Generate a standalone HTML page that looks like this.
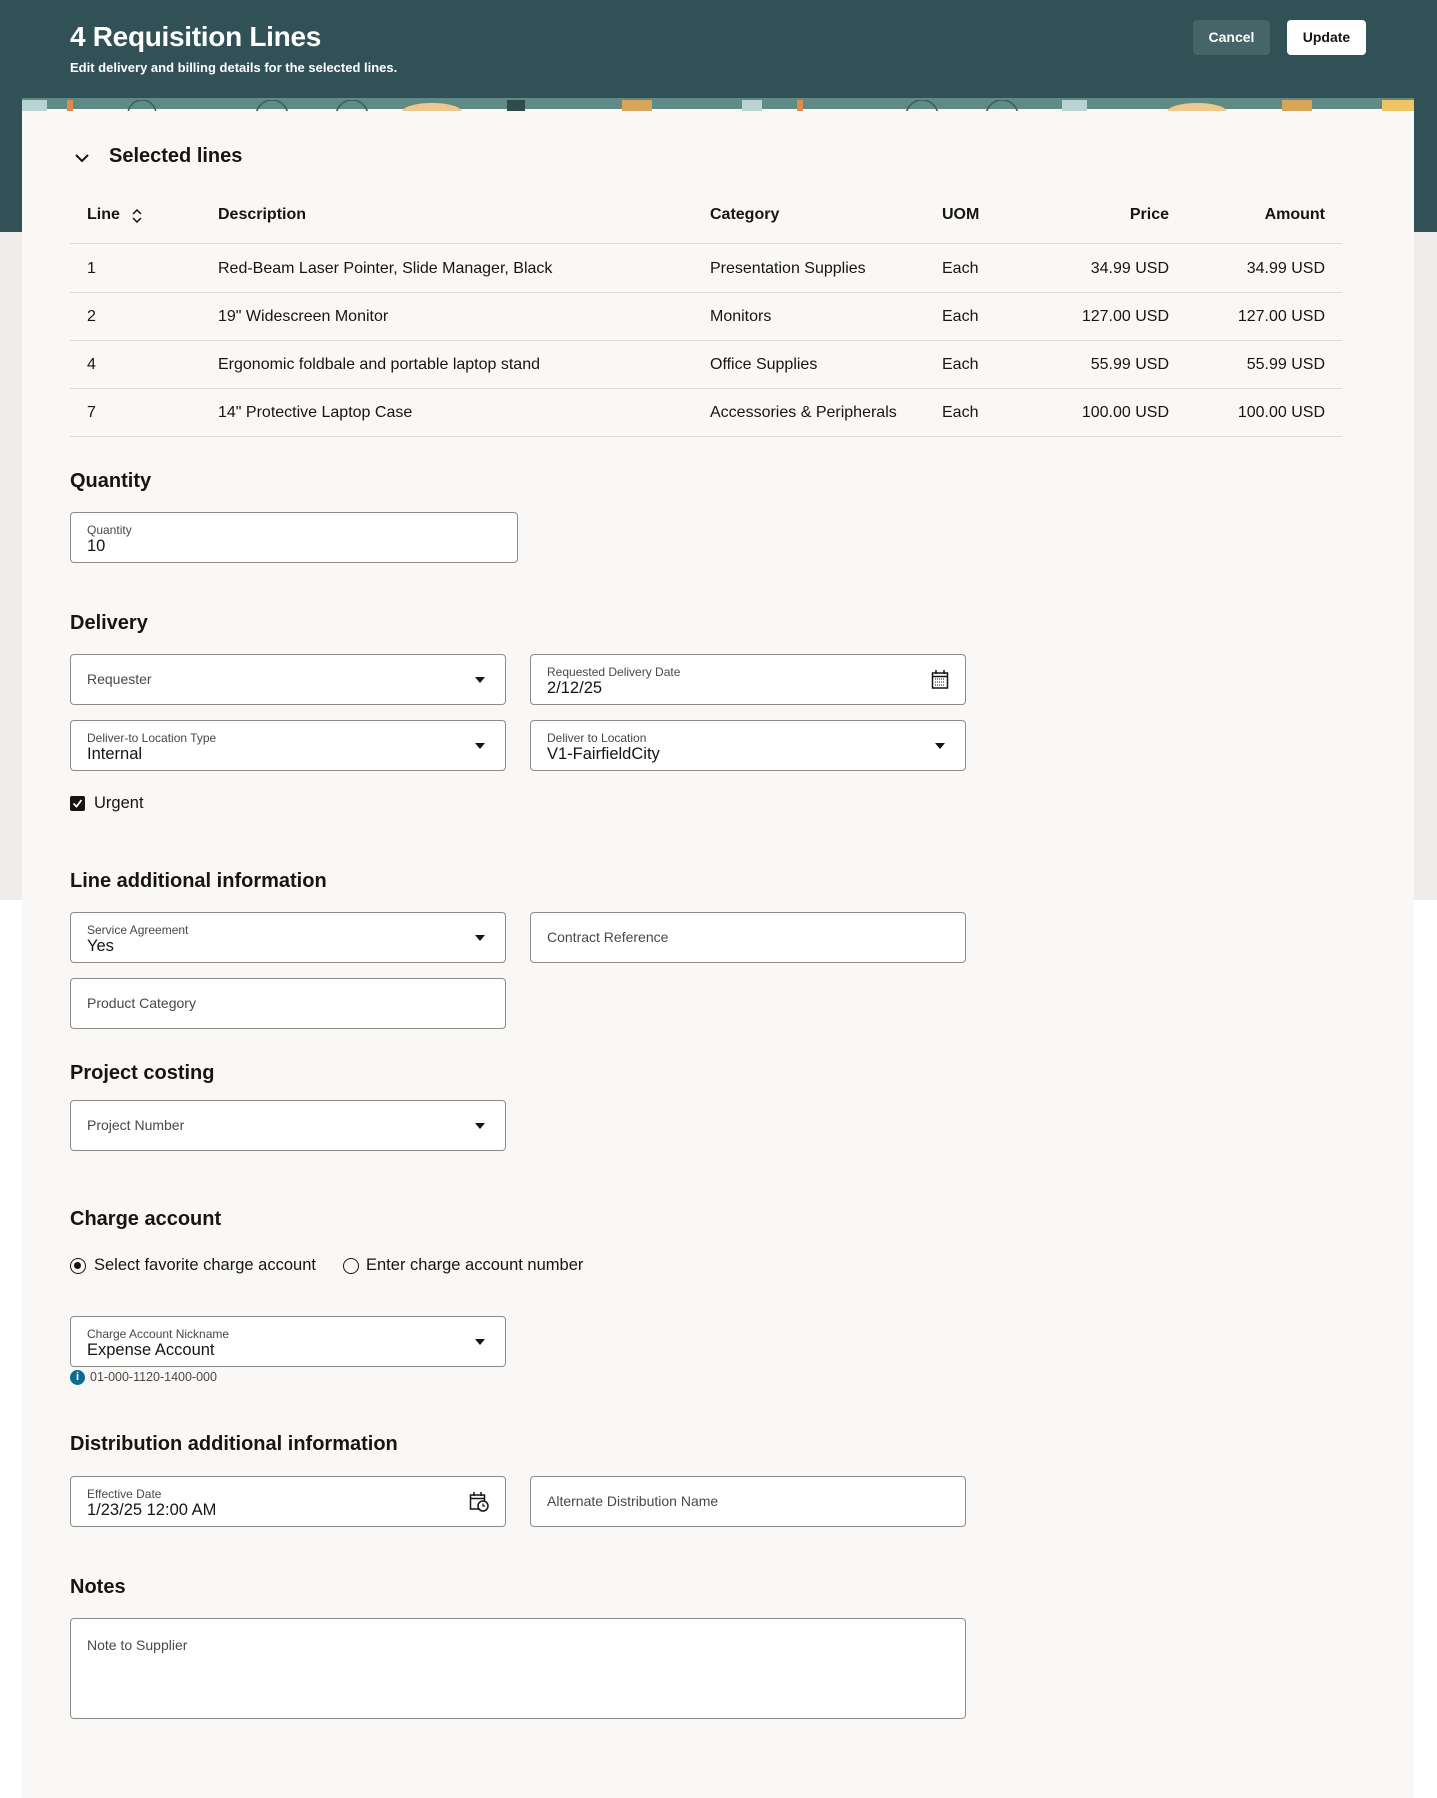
<!DOCTYPE html>
<html><head><meta charset="utf-8"><style>
*{box-sizing:border-box;margin:0;padding:0}
body{width:1437px;height:1786px;position:relative;overflow:hidden;background:#fff;font-family:"Liberation Sans",sans-serif;color:#161513}
.hdr{position:absolute;left:0;top:0;width:1437px;height:232px;background:#325157}
.gray{position:absolute;left:0;top:232px;width:1437px;height:668px;background:#eeedeb}
.card{position:absolute;left:22px;top:98px;width:1392px;height:1700px;background:#f9f8f6;overflow:hidden}
.band{position:absolute;left:0;top:0;width:1392px;height:11px;background:#5f8a86}
.a{position:absolute;white-space:nowrap}
h2{position:absolute;font-size:20px;font-weight:bold;white-space:nowrap}
.f{position:absolute;border:1px solid #8d8b88;border-radius:4px;background:#fff;height:51px}
.lb{position:absolute;left:16px;top:10px;font-size:12px;color:#4a4845}
.vl{position:absolute;left:16px;top:24px;font-size:16.5px}
.ph{position:absolute;left:16px;top:16px;font-size:14px;color:#4a4845}
.dd{position:absolute;right:20px;top:22px;width:0;height:0;border-left:5px solid transparent;border-right:5px solid transparent;border-top:6px solid #161513}
.row{position:absolute;left:48px;width:1272px;height:48px;border-bottom:1px solid #dedcd9;font-size:16px}
.row span{position:absolute;top:15px}
</style></head><body>
<div class="hdr"></div>
<div class="gray"></div>
<div class="a" style="left:70px;top:21px;font-size:28px;font-weight:bold;color:#fff;letter-spacing:-0.3px">4 Requisition Lines</div>
<div class="a" style="left:70px;top:60px;font-size:13px;font-weight:bold;color:#fff">Edit delivery and billing details for the selected lines.</div>
<div class="a" style="left:1193px;top:20px;width:77px;height:35px;background:#456569;border-radius:4px;color:#fff;font-size:14px;font-weight:bold;text-align:center;line-height:35px">Cancel</div>
<div class="a" style="left:1287px;top:20px;width:79px;height:35px;background:#fff;border-radius:4px;color:#161513;font-size:14px;font-weight:bold;text-align:center;line-height:35px">Update</div>
<div class="card">
<div class="band">
<svg width="1392" height="11"><rect x="0" y="0" width="25" height="11" fill="#b9d2d2"/><rect x="45" y="0" width="6" height="11" fill="#e08a50"/><circle cx="120" cy="14" r="14" fill="none" stroke="#3d5c5e" stroke-width="1.5"/><circle cx="250" cy="16" r="16" fill="none" stroke="#3d5c5e" stroke-width="1.5"/><circle cx="330" cy="16" r="16" fill="none" stroke="#3d5c5e" stroke-width="1.5"/><ellipse cx="410" cy="12" rx="30" ry="9" fill="#ecc98e"/><rect x="485" y="0" width="18" height="11" fill="#2e4b4e"/><rect x="600" y="0" width="30" height="11" fill="#d8a65a"/><rect x="720" y="0" width="20" height="11" fill="#b9d2d2"/><rect x="775" y="0" width="6" height="11" fill="#e08a50"/><circle cx="900" cy="16" r="16" fill="none" stroke="#3d5c5e" stroke-width="1.5"/><circle cx="980" cy="16" r="16" fill="none" stroke="#3d5c5e" stroke-width="1.5"/><ellipse cx="1175" cy="12" rx="30" ry="9" fill="#ecc98e"/><rect x="1360" y="0" width="32" height="11" fill="#f0c464"/><rect x="1040" y="0" width="25" height="11" fill="#b9d2d2"/><rect x="1260" y="0" width="30" height="11" fill="#d8a65a"/></svg>
</div>
<svg class="a" style="left:52px;top:55px" width="16" height="10"><path d="M2 2 L8 8 L14 2" stroke="#161513" stroke-width="2" fill="none"/></svg>
<h2 style="left:87px;top:47px;font-size:20px">Selected lines</h2>
<div class="a" style="left:48px;top:108px;width:1272px;height:38px;border-bottom:1px solid #dedcd9;font-size:16px;font-weight:bold">
<span class="a" style="left:17px;top:0">Line</span>
<svg class="a" style="left:62px;top:3px" width="10" height="14"><path d="M1 5 L5 1 L9 5 M1 9 L5 13 L9 9" stroke="#161513" stroke-width="1.5" fill="none"/></svg>
<span class="a" style="left:148px;top:0">Description</span>
<span class="a" style="left:640px;top:0">Category</span>
<span class="a" style="left:872px;top:0">UOM</span>
<span class="a" style="right:173px;top:0">Price</span>
<span class="a" style="right:17px;top:0">Amount</span>
</div>
<div class="row" style="top:147px"><span style="left:17px">1</span><span style="left:148px">Red-Beam Laser Pointer, Slide Manager, Black</span><span style="left:640px">Presentation Supplies</span><span style="left:872px">Each</span><span style="right:173px">34.99 USD</span><span style="right:17px">34.99 USD</span></div>
<div class="row" style="top:195px"><span style="left:17px">2</span><span style="left:148px">19" Widescreen Monitor</span><span style="left:640px">Monitors</span><span style="left:872px">Each</span><span style="right:173px">127.00 USD</span><span style="right:17px">127.00 USD</span></div>
<div class="row" style="top:243px"><span style="left:17px">4</span><span style="left:148px">Ergonomic foldbale and portable laptop stand</span><span style="left:640px">Office Supplies</span><span style="left:872px">Each</span><span style="right:173px">55.99 USD</span><span style="right:17px">55.99 USD</span></div>
<div class="row" style="top:291px"><span style="left:17px">7</span><span style="left:148px">14" Protective Laptop Case</span><span style="left:640px">Accessories &amp; Peripherals</span><span style="left:872px">Each</span><span style="right:173px">100.00 USD</span><span style="right:17px">100.00 USD</span></div>

<h2 style="left:48px;top:372px">Quantity</h2>
<div class="f" style="left:48px;top:414px;width:448px"><div class="lb">Quantity</div><div class="vl">10</div></div>

<h2 style="left:48px;top:514px">Delivery</h2>
<div class="f" style="left:48px;top:556px;width:436px"><div class="ph" style="top:16px">Requester</div><div class="dd"></div></div>
<div class="f" style="left:508px;top:556px;width:436px"><div class="lb">Requested Delivery Date</div><div class="vl">2/12/25</div>
<svg class="a" style="right:16px;top:15px" width="18" height="19"><rect x="1.5" y="3" width="15" height="15" fill="none" stroke="#161513" stroke-width="1.5"/><line x1="1.5" y1="6.5" x2="16.5" y2="6.5" stroke="#161513" stroke-width="1.5"/><line x1="5" y1="0" x2="5" y2="4" stroke="#161513" stroke-width="1.5"/><line x1="13" y1="0" x2="13" y2="4" stroke="#161513" stroke-width="1.5"/><path d="M4 9h10M4 12h10M4 15h10" stroke="#161513" stroke-width="1" stroke-dasharray="1 1"/></svg></div>
<div class="f" style="left:48px;top:622px;width:436px"><div class="lb">Deliver-to Location Type</div><div class="vl">Internal</div><div class="dd"></div></div>
<div class="f" style="left:508px;top:622px;width:436px"><div class="lb">Deliver to Location</div><div class="vl">V1-FairfieldCity</div><div class="dd"></div></div>
<div class="a" style="left:48px;top:698px;width:15px;height:15px;background:#161513;border-radius:2px"><svg width="15" height="15"><path d="M3.5 7.5 L6.5 10.5 L11.5 4" stroke="#fff" stroke-width="1.8" fill="none"/></svg></div>
<div class="a" style="left:72px;top:696px;font-size:16.5px">Urgent</div>

<h2 style="left:48px;top:772px">Line additional information</h2>
<div class="f" style="left:48px;top:814px;width:436px"><div class="lb">Service Agreement</div><div class="vl">Yes</div><div class="dd"></div></div>
<div class="f" style="left:508px;top:814px;width:436px"><div class="ph">Contract Reference</div></div>
<div class="f" style="left:48px;top:880px;width:436px"><div class="ph">Product Category</div></div>

<h2 style="left:48px;top:964px">Project costing</h2>
<div class="f" style="left:48px;top:1002px;width:436px"><div class="ph">Project Number</div><div class="dd"></div></div>

<h2 style="left:48px;top:1110px">Charge account</h2>
<div class="a" style="left:48px;top:1160px;width:16px;height:16px;border:1.5px solid #161513;border-radius:50%"><div style="position:absolute;left:3px;top:3px;width:7px;height:7px;background:#161513;border-radius:50%"></div></div>
<div class="a" style="left:72px;top:1158px;font-size:16.5px">Select favorite charge account</div>
<div class="a" style="left:321px;top:1160px;width:16px;height:16px;border:1.5px solid #161513;border-radius:50%"></div>
<div class="a" style="left:344px;top:1158px;font-size:16.5px">Enter charge account number</div>
<div class="f" style="left:48px;top:1218px;width:436px"><div class="lb">Charge Account Nickname</div><div class="vl">Expense Account</div><div class="dd"></div></div>
<div class="a" style="left:48px;top:1272px;width:15px;height:15px;background:#0d6b8f;border-radius:50%;color:#fff;font-size:11px;font-weight:bold;text-align:center;line-height:15px">i</div>
<div class="a" style="left:68px;top:1272px;font-size:12.5px;color:#4a4845">01-000-1120-1400-000</div>

<h2 style="left:48px;top:1335px">Distribution additional information</h2>
<div class="f" style="left:48px;top:1378px;width:436px"><div class="lb">Effective Date</div><div class="vl">1/23/25 12:00 AM</div>
<svg class="a" style="right:16px;top:15px" width="20" height="20"><rect x="1.5" y="3" width="14" height="14" fill="none" stroke="#161513" stroke-width="1.5"/><line x1="1.5" y1="6.5" x2="15.5" y2="6.5" stroke="#161513" stroke-width="1.5"/><line x1="5" y1="0" x2="5" y2="4" stroke="#161513" stroke-width="1.5"/><line x1="12" y1="0" x2="12" y2="4" stroke="#161513" stroke-width="1.5"/><circle cx="14" cy="14" r="5" fill="#fff" stroke="#161513" stroke-width="1.5"/><path d="M14 11.5V14h2" stroke="#161513" stroke-width="1.2" fill="none"/></svg></div>
<div class="f" style="left:508px;top:1378px;width:436px"><div class="ph">Alternate Distribution Name</div></div>

<h2 style="left:48px;top:1478px">Notes</h2>
<div class="f" style="left:48px;top:1520px;width:896px;height:101px"><div class="ph" style="top:18px">Note to Supplier</div></div>
</div>
</body></html>
